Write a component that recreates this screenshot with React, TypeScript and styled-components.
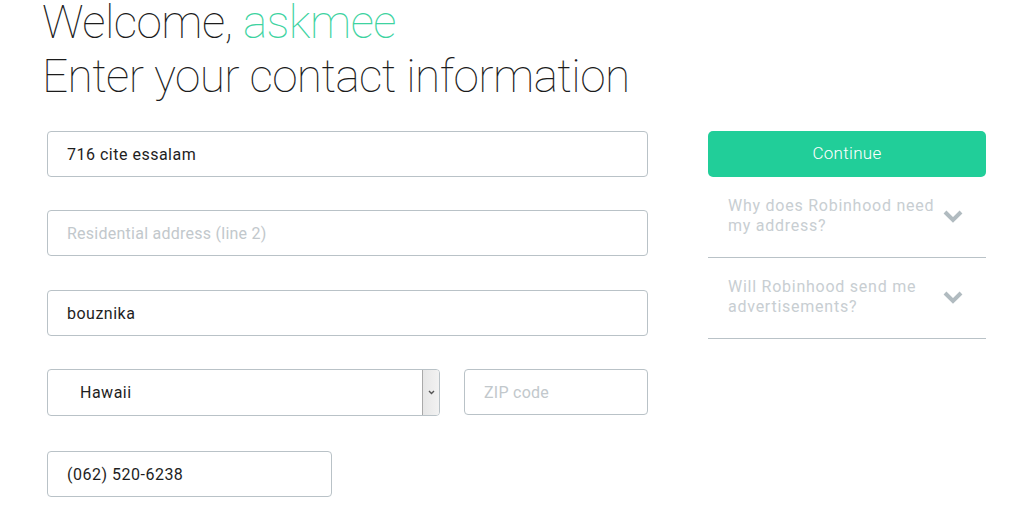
import React from "react";
import styled, { createGlobalStyle } from "styled-components";

const GlobalStyle = createGlobalStyle`
  html, body {
    margin: 0;
    padding: 0;
    background: #ffffff;
    font-family: Roboto, "Liberation Sans", sans-serif;
  }
  * { box-sizing: border-box; }
`;

const Page = styled.div`
  padding: 0 0 0 42px;
  width: 1026px;
  height: 509px;
  overflow: hidden;
`;

const Heading = styled.h1`
  margin: 0;
  font-weight: 100;
  font-size: 46px;
  color: #1c1c1c;
  letter-spacing: -0.6px;
`;

const HeadLine = styled.div<{ $lh: number }>`
  line-height: ${(p) => p.$lh}px;
`;

const Name = styled.span`
  color: #3ed3a1;
`;

const Body = styled.div`
  display: flex;
  gap: 60px;
  margin-top: 22px;
  padding-left: 5px;
`;

const Form = styled.div`
  width: 601px;
  display: flex;
  flex-direction: column;
  gap: 33px;
`;

const Row = styled.div`
  display: flex;
  gap: 24px;
`;

const Input = styled.input<{ $width?: number; $shift?: number }>`
  width: ${(p) => (p.$width ? `${p.$width}px` : "100%")};
  height: 46px;
  margin-top: ${(p) => p.$shift ?? 0}px;
  border: 1px solid #b9c2c7;
  border-radius: 4px;
  padding: 0 19px;
  font-family: Roboto, "Liberation Sans", sans-serif;
  font-size: 16px;
  letter-spacing: 0.5px;
  color: #1e1e1e;
  background: #fff;
  outline: none;
  &::placeholder {
    color: #c2c8cc;
    letter-spacing: 0.25px;
  }
`;

const SelectWrap = styled.div`
  position: relative;
  width: 393px;
  height: 47px;
`;

const Select = styled.select`
  appearance: none;
  width: 100%;
  height: 100%;
  border: 1px solid #b9c2c7;
  border-radius: 4px;
  padding: 0 30px 0 32px;
  font-family: Roboto, "Liberation Sans", sans-serif;
  font-size: 16px;
  letter-spacing: 0.5px;
  color: #1e1e1e;
  background: #fff;
  outline: none;
`;

const SelectArrow = styled.div`
  position: absolute;
  top: 1px;
  right: 1px;
  bottom: 1px;
  width: 17px;
  border-left: 1px solid #a9a9a9;
  border-radius: 0 3px 3px 0;
  background: linear-gradient(to right, #e6e6e6, #f2f2f2);
  display: flex;
  align-items: center;
  justify-content: center;
`;

const Side = styled.div`
  width: 278px;
  display: flex;
  flex-direction: column;
`;

const Button = styled.button`
  height: 46px;
  border: none;
  border-radius: 5px;
  background: #21ce99;
  color: #fff;
  font-family: Roboto, "Liberation Sans", sans-serif;
  font-size: 17px;
  font-weight: 300;
  letter-spacing: 0.3px;
  padding: 0 0 2px;
  cursor: pointer;
`;

const Faq = styled.div`
  display: flex;
  align-items: center;
  justify-content: space-between;
  height: 81px;
  padding: 0 23px 0 20px;
  border-bottom: 1px solid #b9c2c7;
`;

const FaqText = styled.div`
  font-size: 16px;
  line-height: 20px;
  color: #c8ced2;
  letter-spacing: 0.75px;
  width: 220px;
  margin-top: -3px;
`;

const ChevronBox = styled.div`
  display: flex;
  margin-top: -3px;
`;

const Chevron = () => (
  <ChevronBox>
    <svg width="20" height="14" viewBox="0 0 20 14">
      <path d="M2 3 L10 11 L18 3" fill="none" stroke="#b1bbc0" strokeWidth="4" />
    </svg>
  </ChevronBox>
);

const SmallChevron = () => (
  <svg width="7" height="5" viewBox="0 0 7 5">
    <path d="M1 1 L3.5 3.5 L6 1" fill="none" stroke="#555" strokeWidth="1.4" />
  </svg>
);

export default function App() {
  return (
    <>
      <GlobalStyle />
      <Page>
        <Heading>
          <HeadLine $lh={44}>
            Welcome, <Name>askmee</Name>
          </HeadLine>
          <HeadLine $lh={65}>Enter your contact information</HeadLine>
        </Heading>
        <Body>
          <Form>
            <Input defaultValue="716 cite essalam" />
            <Input placeholder="Residential address (line 2)" />
            <Input $shift={1} defaultValue="bouznika" />
            <Row>
              <SelectWrap>
                <Select defaultValue="Hawaii">
                  <option>Hawaii</option>
                </Select>
                <SelectArrow>
                  <SmallChevron />
                </SelectArrow>
              </SelectWrap>
              <Input $width={184} placeholder="ZIP code" />
            </Row>
            <Input $width={285} $shift={2} defaultValue="(062) 520-6238" />
          </Form>
          <Side>
            <Button>Continue</Button>
            <Faq>
              <FaqText>Why does Robinhood need my address?</FaqText>
              <Chevron />
            </Faq>
            <Faq>
              <FaqText>Will Robinhood send me advertisements?</FaqText>
              <Chevron />
            </Faq>
          </Side>
        </Body>
      </Page>
    </>
  );
}
